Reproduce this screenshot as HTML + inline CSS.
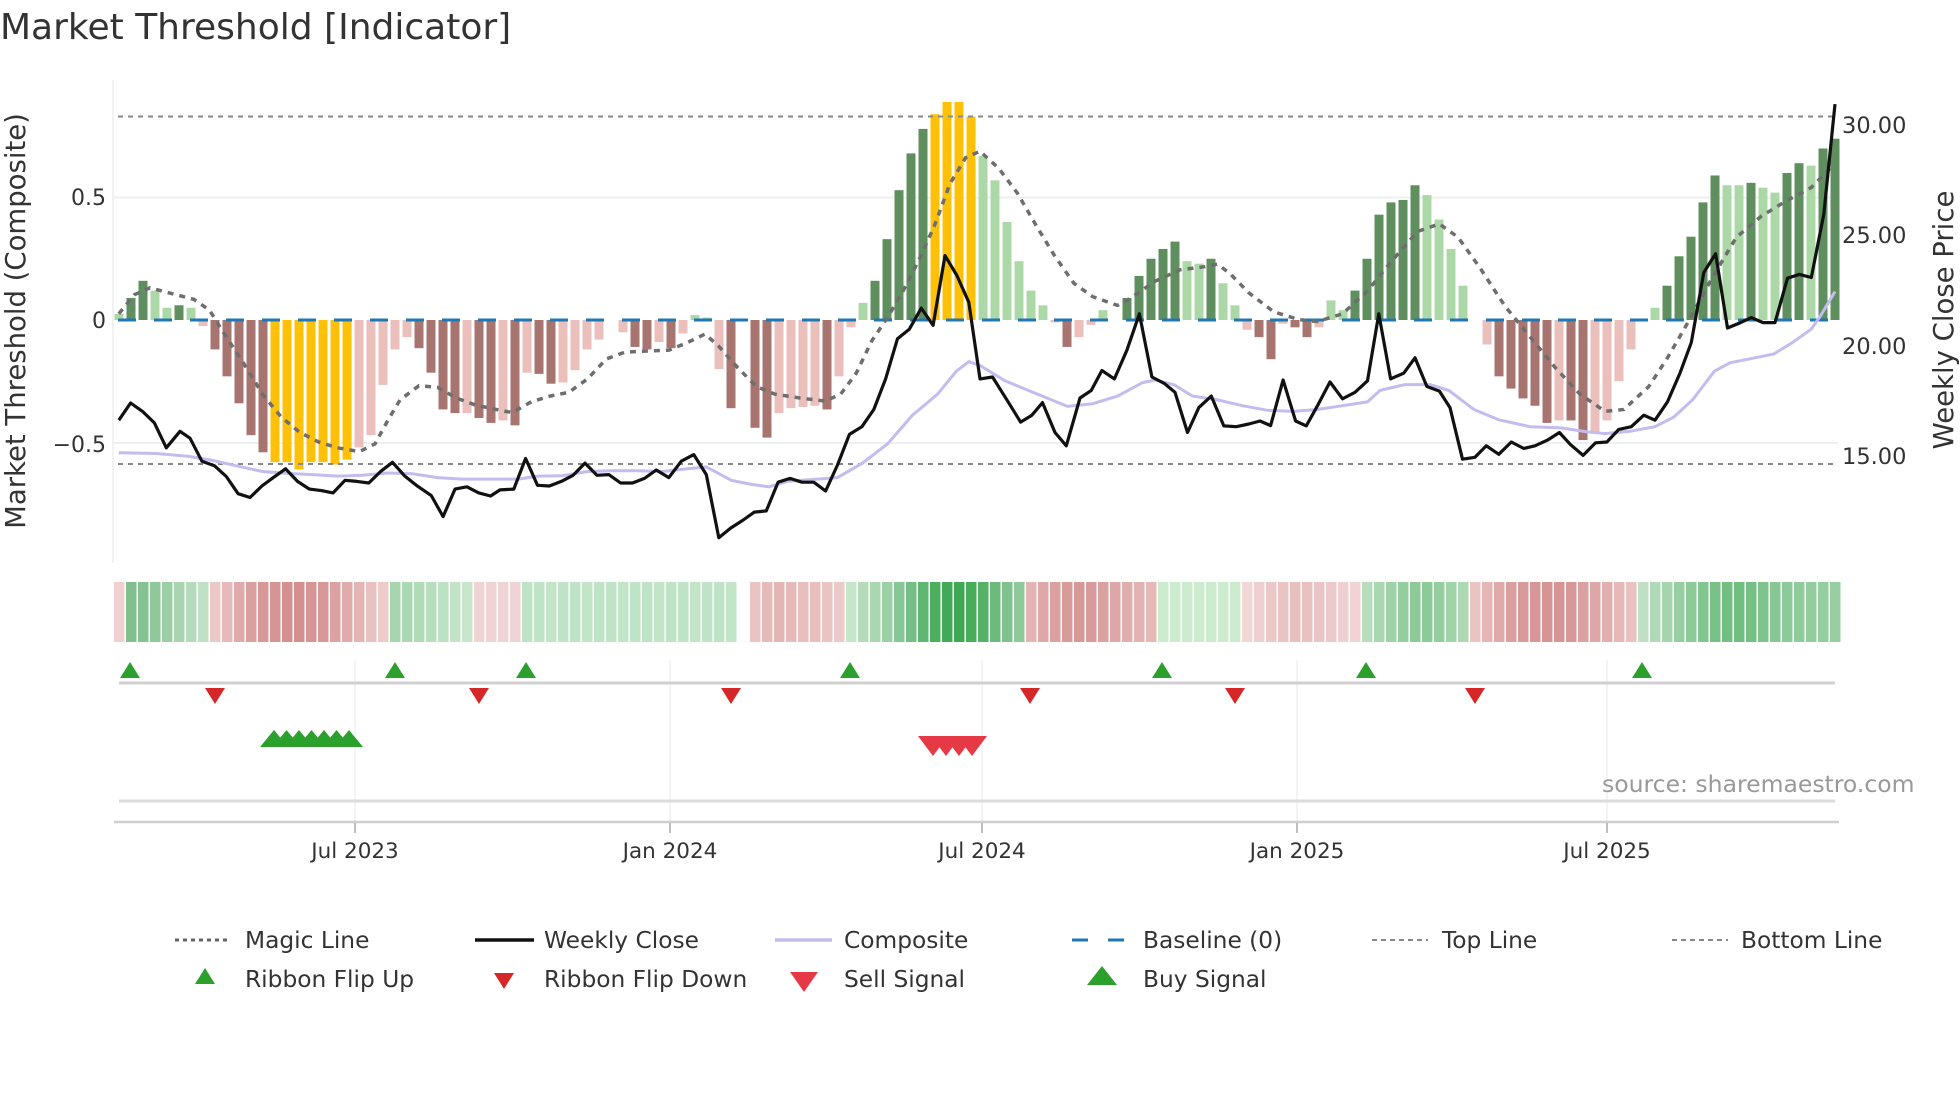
<!DOCTYPE html>
<html><head><meta charset="utf-8"><style>
html,body{margin:0;padding:0;background:#fff;width:1960px;height:1102px;overflow:hidden}
svg{display:block}
text{font-family:"DejaVu Sans","Liberation Sans",sans-serif;fill:#333}
</style></head><body>
<svg id="s" width="1960" height="1102" viewBox="0 0 1960 1102" xmlns="http://www.w3.org/2000/svg">
<rect width="1960" height="1102" fill="#fff"/>
<text x="0" y="39" font-size="36">Market Threshold [Indicator]</text>
<line x1="113" y1="80" x2="113" y2="563" stroke="#eee" stroke-width="1.5"/>
<line x1="114" y1="197.5" x2="1838" y2="197.5" stroke="#edf0f2" stroke-width="2"/>
<line x1="114" y1="443" x2="1838" y2="443" stroke="#edf0f2" stroke-width="2"/>
<g id="bars"></g>
<line x1="118" y1="116.5" x2="1836" y2="116.5" stroke="#888" stroke-width="2" stroke-dasharray="5,5"/>
<line x1="118" y1="464" x2="1836" y2="464" stroke="#888" stroke-width="2" stroke-dasharray="5,5"/>
<line x1="118" y1="320" x2="1836" y2="320" stroke="#1f77b4" stroke-width="3" stroke-dasharray="18,18"/>
<g id="lines"></g>
<text x="106" y="205" font-size="22" text-anchor="end">0.5</text>
<text x="106" y="328" font-size="22" text-anchor="end">0</text>
<text x="106" y="452" font-size="22" text-anchor="end">−0.5</text>
<text x="1842" y="133" font-size="22.5">30.00</text>
<text x="1842" y="243" font-size="22.5">25.00</text>
<text x="1842" y="354" font-size="22.5">20.00</text>
<text x="1842" y="464" font-size="22.5">15.00</text>
<text transform="translate(25,321) rotate(-90)" font-size="27.5" text-anchor="middle">Market Threshold (Composite)</text>
<text transform="translate(1953,320) rotate(-90)" font-size="27.5" text-anchor="middle">Weekly Close Price</text>
<g id="ribbon"></g>
<g stroke="#eef0f2" stroke-width="1.5">
<line x1="355" y1="660" x2="355" y2="830"/><line x1="670" y1="660" x2="670" y2="830"/><line x1="982" y1="660" x2="982" y2="830"/><line x1="1297" y1="660" x2="1297" y2="830"/><line x1="1607" y1="660" x2="1607" y2="830"/>
</g>
<line x1="119" y1="683" x2="1835" y2="683" stroke="#d0d0d0" stroke-width="3"/>
<g id="flips"></g>
<line x1="119" y1="801" x2="1835" y2="801" stroke="#dcdcdc" stroke-width="3"/>
<line x1="114" y1="822" x2="1839" y2="822" stroke="#cfcfcf" stroke-width="2.5"/>
<g stroke="#aaa" stroke-width="1.5">
<line x1="355" y1="823" x2="355" y2="833"/><line x1="670" y1="823" x2="670" y2="833"/><line x1="982" y1="823" x2="982" y2="833"/><line x1="1297" y1="823" x2="1297" y2="833"/><line x1="1607" y1="823" x2="1607" y2="833"/>
</g>
<text x="1602" y="792" font-size="23.5" style="fill:#999">source: sharemaestro.com</text>
<g font-size="21.5" text-anchor="middle">
<text x="355" y="858">Jul 2023</text><text x="670" y="858">Jan 2024</text><text x="982" y="858">Jul 2024</text><text x="1297" y="858">Jan 2025</text><text x="1607" y="858">Jul 2025</text>
</g>
<g font-size="23.3">
<line x1="175" y1="940" x2="230" y2="940" stroke="#666" stroke-width="3" stroke-dasharray="4,4"/><text x="245" y="948">Magic Line</text>
<line x1="475" y1="940" x2="534" y2="940" stroke="#111" stroke-width="3.5"/><text x="544" y="948">Weekly Close</text>
<line x1="775" y1="940" x2="832" y2="940" stroke="#c3bcee" stroke-width="3.5"/><text x="844" y="948">Composite</text>
<line x1="1072" y1="940" x2="1129" y2="940" stroke="#1f77b4" stroke-width="3" stroke-dasharray="16,20"/><text x="1143" y="948">Baseline (0)</text>
<line x1="1372" y1="940" x2="1428" y2="940" stroke="#888" stroke-width="2" stroke-dasharray="5,4"/><text x="1442" y="948">Top Line</text>
<line x1="1672" y1="940" x2="1728" y2="940" stroke="#888" stroke-width="2" stroke-dasharray="5,4"/><text x="1741" y="948">Bottom Line</text>
<polygon points="205,968 195,984 215,984" fill="#2ca02c"/><text x="245" y="987">Ribbon Flip Up</text>
<polygon points="494,973 514,973 504,989" fill="#d62728"/><text x="544" y="987">Ribbon Flip Down</text>
<polygon points="790,972 818,972 804,992" fill="#e63946"/><text x="844" y="987">Sell Signal</text>
<polygon points="1102,966 1087,985 1117,985" fill="#2ca02c"/><text x="1143" y="987">Buy Signal</text>
</g>
</svg>
<script>
var NS="http://www.w3.org/2000/svg";
function el(p,t,a){var e=document.createElementNS(NS,t);for(var k in a)e.setAttribute(k,a[k]);p.appendChild(e);return e;}
var GD="#5f8f5f",GL="#acd8a7",RD="#a87470",RL="#ebbfbb",Y="#ffc107";
var B=[[.025,GL],[.09,GD],[.16,GD],[.12,GL],[.05,GL],[.06,GD],[.05,GL],[-.025,RL],[-.12,RD],[-.23,RD],[-.34,RD],[-.47,RD],[-.54,RD],[-.58,Y],[-.58,Y],[-.61,Y],[-.58,Y],[-.58,Y],[-.59,Y],[-.57,Y],[-.52,RL],[-.47,RL],[-.265,RL],[-.12,RL],[-.07,RL],[-.115,RD],[-.215,RD],[-.365,RD],[-.38,RD],[-.38,RL],[-.4,RD],[-.42,RD],[-.41,RL],[-.43,RD],[-.215,RL],[-.22,RD],[-.26,RD],[-.255,RL],[-.205,RL],[-.12,RL],[-.08,RL],[0,RL],[-.05,RL],[-.11,RD],[-.12,RD],[-.09,RL],[-.115,RD],[-.055,RL],[.02,GL],[.01,GL],[-.2,RL],[-.36,RD],null,[-.44,RD],[-.48,RD],[-.38,RL],[-.36,RL],[-.355,RL],[-.35,RL],[-.365,RD],[-.23,RL],[-.03,RL],[.07,GL],[.16,GD],[.33,GD],[.53,GD],[.68,GD],[.78,GD],[.84,Y],[.89,Y],[.89,Y],[.83,Y],
[.67,GL],[.57,GL],[.40,GL],[.24,GL],[.12,GL],[.06,GL],[-.01,RL],[-.11,RD],[-.07,RL],[-.02,RL],[.04,GL],[0,GL],[.09,GD],[.18,GD],[.25,GD],[.29,GD],[.32,GD],[.24,GL],[.23,GL],[.25,GD],[.15,GL],[.06,GL],[-.04,RL],[-.07,RD],[-.16,RD],[-.015,RL],[-.03,RD],[-.07,RD],[-.03,RL],[.08,GL],[.04,GL],[.12,GD],[.25,GD],[.43,GD],[.48,GD],[.49,GD],[.55,GD],[.51,GL],[.41,GL],[.29,GL],[.14,GL],null,[-.1,RL],[-.23,RD],[-.28,RD],[-.32,RD],[-.35,RD],[-.42,RD],[-.41,RL],[-.41,RD],[-.49,RD],[-.46,RL],[-.41,RL],[-.25,RL],[-.12,RL],null,[.05,GL],[.14,GD],[.26,GD],[.34,GD],[.48,GD],[.59,GD],[.55,GL],[.55,GL],[.56,GD],[.54,GL],[.52,GL],[.6,GD],[.64,GD],[.63,GL],[.70,GD],[.74,GD]];
var bars=document.getElementById("bars");
for(var i=0;i<B.length;i++){var b=B[i];if(!b)continue;var x=119+12*i-4.5,v=b[0],h=Math.abs(v)*245;if(h<1)continue;
el(bars,"rect",{x:x,y:v>0?320-h:320,width:9,height:h,fill:b[1]});}
function pts(a,off){var s=[];for(var i=0;i<a.length;i+=2)s.push((off+a[i]/1.6).toFixed(1)+","+(a[i+1]/2.613).toFixed(1));return s;}
var magic1=[190,820,215,770,240,752,270,765,310,782,335,810,360,875,390,950,420,1030,450,1090,480,1130,510,1155,540,1170,575,1180,600,1160,620,1100,640,1045,670,1008,700,1012,730,1040,760,1058,800,1072,820,1078,850,1050,880,1035,910,1025,940,990,970,938,1000,920,1040,917,1070,915,1100,895,1128,873,1150,905,1180,960,1210,1010,1240,1030,1280,1040,1320,1048,1345,1030,1370,975,1395,890,1420,830,1445,760,1470,680,1495,590,1520,480,1545,412,1568,395];
var magic2=[30,440,60,505,90,590,120,670,150,740,180,775,220,798,240,780,280,735,320,705,360,697,380,690,400,715,430,765,470,815,510,835,540,840,580,820,620,760,660,680,700,605,735,585,765,620,800,700,840,800,880,880,920,960,960,1030,1000,1075,1030,1070,1070,1010,1100,935,1130,850,1170,730,1210,620,1250,565,1290,525,1330,490,1360,440];
var comp1=[190,1183,250,1185,300,1192,340,1203,380,1218,420,1232,460,1237,500,1240,540,1244,580,1242,620,1236,660,1238,700,1248,740,1252,800,1252,830,1252,860,1244,900,1243,940,1232,980,1230,1020,1230,1060,1232,1100,1225,1130,1220,1170,1255,1200,1265,1230,1272,1260,1258,1300,1253,1340,1248,1380,1210,1420,1160,1460,1085,1500,1030,1530,970,1550,945,1568,955];
var comp2=[40,995,80,1022,140,1062,180,1055,220,1035,260,1000,280,993,310,1005,340,1035,380,1045,420,1060,460,1072,500,1075,540,1070,580,1060,620,1050,640,1020,680,1005,720,1005,750,1020,790,1070,830,1097,880,1115,930,1118,970,1128,1000,1133,1040,1127,1080,1115,1110,1090,1140,1045,1175,970,1200,948,1240,935,1270,925,1300,895,1330,860,1345,825,1368,762];
var close1=[190,1098,209,1053,228,1075,247,1105,266,1170,288,1127,304,1145,323,1205,343,1217,362,1245,381,1290,400,1300,419,1270,438,1247,457,1225,476,1258,495,1278,514,1282,533,1288,552,1255,571,1258,590,1262,609,1232,628,1208,647,1243,666,1268,690,1295,709,1350,728,1278,747,1272,766,1288,785,1296,800,1280,822,1278,841,1198,860,1268,879,1270,898,1258,917,1242,936,1210,955,1242,974,1240,993,1262,1012,1262,1031,1250,1050,1228,1070,1248,1090,1205,1110,1188,1130,1240,1150,1405,1169,1380,1188,1360,1207,1338,1226,1335,1245,1260,1264,1250,1283,1260,1302,1260,1321,1283,1340,1215,1359,1135,1379,1115,1398,1070,1417,990,1436,885,1455,860,1474,805,1493,850,1512,668,1531,720,1550,790,1568,990];
var close2=[20,985,45,1050,65,1103,83,1085,100,1052,120,1130,138,1165,160,1040,178,1020,195,968,215,990,235,915,255,820,275,985,295,1002,312,1025,332,1130,350,1065,370,1035,390,1113,410,1115,430,1108,448,1100,465,1112,485,993,505,1100,522,1113,540,1060,560,998,580,1042,600,1025,620,995,638,820,657,990,678,975,696,935,715,1010,735,1022,752,1065,772,1200,792,1195,810,1165,830,1187,850,1155,870,1172,888,1165,908,1150,927,1130,945,1162,965,1190,985,1157,1003,1155,1022,1122,1042,1115,1062,1085,1080,1098,1100,1050,1120,975,1138,895,1158,712,1177,663,1196,857,1214,845,1234,830,1253,843,1272,843,1292,727,1311,717,1330,725,1350,560,1368,272];
var L=document.getElementById("lines");
el(L,"polyline",{points:pts(magic1,0).concat(pts(magic2,980)).join(" "),fill:"none",stroke:"#6e6e6e","stroke-width":3.5,"stroke-dasharray":"6,6"});
el(L,"polyline",{points:pts(comp1,0).concat(pts(comp2,980)).join(" "),fill:"none",stroke:"#c3bcee","stroke-width":3});
el(L,"polyline",{points:pts(close1,0).concat(pts(close2,980)).join(" "),fill:"none",stroke:"#111","stroke-width":3.2,"stroke-linejoin":"round"});
var R=document.getElementById("ribbon");
function rc(i){
 if(i==0)return"#f0d0d0";
 if(i<=7)return["#7fc08e","#86c393","#90c89b","#9ccfa6","#a8d5b0","#b5dbbc","#c0e1c6"][i-1];
 if(i<=22){var c=["#ecc9c9","#e6baba","#e0aaaa","#db9f9f","#d89898","#d69494","#d48f8f","#d48f8f","#d69494","#d89898","#dca2a2","#e0abab","#e4b5b5","#e9c1c1","#eecbcb"];return c[i-8];}
 if(i<=29)return["#a6d6ae","#aad8b2","#b0dbb7","#b7debd","#bde1c3","#c2e3c7","#c8e6cc"][i-23];
 if(i<=33)return"#f0d3d3";
 if(i<=51)return i%3==0?"#c2e5c8":"#bfe3c6";
 if(i==52)return null;
 if(i<=60)return["#eac3c3","#e6baba","#e4b5b5","#e6baba","#e8bebe","#e8bebe","#eac3c3","#edcaca"][i-53];
 if(i<=75)return["#c5e6ca","#b4dcba","#a8d7b0","#9bd0a4","#86c795","#74bf85","#60b772","#4caf5e","#41a957","#3fa855","#48ac5b","#55b266","#6cbb7c","#7fc28d","#8ec99a"][i-61];
 if(i<=86)return["#e4b3b3","#dfa7a7","#dba0a0","#d99a9a","#d79898","#d89a9a","#dba1a1","#dea7a7","#e1aeae","#e3b2b2","#e6b8b8"][i-76];
 if(i<=93)return"#cdeccf";
 if(i<=103)return["#f2d5d5","#efcfcf","#ecc8c8","#eac3c3","#e8bfbf","#e9c1c1","#ebc5c5","#edcaca","#efcfcf","#f1d3d3"][i-94];
 if(i<=112)return["#b7ddbd","#a8d7b0","#9ed2a7","#94cd9e","#8ccb98","#8ccb98","#94cd9e","#a0d3a8","#acd8b3"][i-104];
 if(i<=126)return["#ebc3c3","#e6b6b6","#e1aaaa","#dc9f9f","#d99a9a","#d79797","#d69494","#d69494","#d89898","#dba0a0","#dea7a7","#e2afaf","#e6b8b8","#eac1c1"][i-113];
 return["#bfe0c4","#b0dab7","#a4d5ac","#98cfa2","#8ccb98","#82c68f","#79c187","#72bf81","#70be80","#76c085","#7fc48c","#86c793","#8dca99","#90cb9c","#93cd9e","#95ce9f","#98cfa2"][i-127];
}
for(var i=0;i<144;i++){var c=rc(i);if(!c)continue;el(R,"rect",{x:114+12*i,y:582,width:10.5,height:60,fill:c});}
var F=document.getElementById("flips");
[130,395,526,850,1162,1366,1642].forEach(function(x){el(F,"polygon",{points:(x)+",662 "+(x-10)+",678 "+(x+10)+",678",fill:"#2ca02c"});});
[215,479,731,1030,1235,1475].forEach(function(x){el(F,"polygon",{points:(x-10)+",688 "+(x+10)+",688 "+x+",704",fill:"#d62728"});});
for(var k=0;k<7;k++){var x=274+k*12.5;el(F,"polygon",{points:x+",730 "+(x-14)+",747 "+(x+14)+",747",fill:"#2ca02c"});}
for(var k=0;k<4;k++){var x=933+k*13;el(F,"polygon",{points:(x-15)+",736 "+(x+15)+",736 "+x+",756",fill:"#e63946"});}
</script>
</body></html>
